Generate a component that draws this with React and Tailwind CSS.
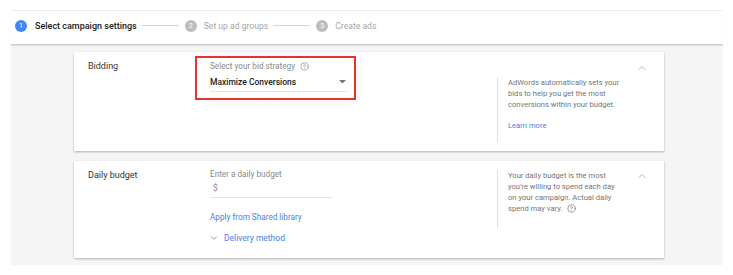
import { ChevronUp, ChevronDown, CircleHelp } from 'lucide-react';

function Step({ n, label, active }) {
  return (
    <div className="flex items-center">
      <div
        className={
          active
            ? 'w-[12px] h-[12px] rounded-full bg-[#4285f4] text-white text-[7px] leading-[12px] text-center'
            : 'w-[12px] h-[12px] rounded-full bg-[#bdbdbd] text-white text-[7px] leading-[12px] text-center'
        }
      >
        {n}
      </div>
      <span
        className={
          active
            ? 'ml-[8px] text-[9px] leading-[12px] font-medium text-[#212121] whitespace-nowrap'
            : 'ml-[7px] text-[8.6px] leading-[12px] text-[#a6a6a6] whitespace-nowrap'
        }
      >
        {label}
      </span>
    </div>
  );
}

function Line() {
  return <div className="ml-[5px] mr-[6px] w-[37px] h-px bg-[#d6d6d6]" />;
}

export default function App() {
  return (
    <div className="w-[733px] h-[275px] bg-white pt-[10px] font-['Roboto',sans-serif] overflow-hidden">
      <div className="ml-[11px] w-[712px]">
        <div className="relative z-10 h-[35px] border-t border-t-[#ececec] border-b border-b-[#cfcfcf] shadow-[0_1px_1px_rgba(0,0,0,0.08)] flex items-center pb-[4px] pl-[4px] bg-white">
          <Step n="1" label="Select campaign settings" active />
          <Line />
          <Step n="2" label="Set up ad groups" />
          <Line />
          <Step n="3" label="Create ads" />
        </div>
        <div className="h-[220px] bg-[#f5f5f5] pt-[7px] pl-[63px]">
          {/* Card 1 */}
          <div className="w-[590px] h-[99px] bg-white shadow-[0_1px_2px_rgba(0,0,0,0.28)] flex items-start">
            <div className="w-[136px] pl-[14px] mt-[8px] text-[9px] leading-[12px] text-[#333333]">Bidding</div>
            <div className="w-[287px] mt-[4px]">
              <div className="ml-[-15px] w-[161px] h-[44px] border-2 border-[#e8322b] pl-[13px] pr-[6px] pt-[2px]">
                <div className="flex items-center h-[12px]">
                  <span className="text-[8.2px] leading-[12px] text-[#8a8a8a] whitespace-nowrap">Select your bid strategy</span>
                  <CircleHelp size={9} strokeWidth={1.8} className="ml-[5px] text-[#8a8a8a]" />
                </div>
                <div className="mt-[4px] h-[12px] flex items-center justify-between pr-[2px]">
                  <span className="text-[8.5px] leading-[12px] font-medium text-[#212121] whitespace-nowrap">Maximize Conversions</span>
                  <svg width="7" height="4" viewBox="0 0 7 4">
                    <path d="M0 0 L7 0 L3.5 3.5 Z" fill="#757575" />
                  </svg>
                </div>
                <div className="mt-[3px] border-b border-[#e4e4e4]" />
              </div>
            </div>
            <div className="w-[125px] mt-[25px] h-[65px] border-l border-[#e0e0e0] pl-[10px]">
              <p className="text-[7.6px] leading-[11px] text-[#757575] whitespace-nowrap">
                AdWords automatically sets your
                <br />
                bids to help you get the most
                <br />
                conversions within your budget.
              </p>
              <p className="mt-[10px] text-[7.6px] leading-[11px] text-[#4a80e8] whitespace-nowrap">Learn more</p>
            </div>
            <ChevronUp size={12} strokeWidth={1.5} className="ml-[14px] mt-[10px] text-[#9e9e9e]" />
          </div>

          {/* Card 2 */}
          <div className="mt-[10px] w-[590px] h-[97px] bg-white shadow-[0_1px_2px_rgba(0,0,0,0.28)] flex items-start">
            <div className="w-[136px] pl-[14px] mt-[8px] text-[9px] leading-[12px] text-[#333333]">Daily budget</div>
            <div className="w-[287px] mt-[7px]">
              <div className="text-[8.2px] leading-[12px] text-[#8a8a8a] whitespace-nowrap">Enter a daily budget</div>
              <div className="mt-[2px] pl-[3px] text-[8.5px] leading-[12px] text-[#8a8a8a]">$</div>
              <div className="mt-[3px] w-[122px] border-b border-[#e4e4e4]" />
              <div className="mt-[13px] text-[8.2px] leading-[12px] text-[#4a80e8] whitespace-nowrap">Apply from Shared library</div>
              <div className="mt-[9px] flex items-center h-[12px]">
                <ChevronDown size={10} strokeWidth={1.8} className="text-[#757575] ml-[-1px]" />
                <span className="ml-[5px] text-[8.5px] leading-[12px] text-[#4a80e8] whitespace-nowrap">Delivery method</span>
              </div>
            </div>
            <div className="w-[125px] mt-[9px] h-[58px] border-l border-[#e0e0e0] pl-[10px]">
              <p className="text-[7.6px] leading-[11px] text-[#757575] whitespace-nowrap">
                Your daily budget is the most
                <br />
                you're willing to spend each day
                <br />
                on your campaign. Actual daily
                <br />
                <span className="inline-flex items-center">
                  spend may vary.
                  <CircleHelp size={9} strokeWidth={1.8} className="ml-[5px] text-[#757575]" />
                </span>
              </p>
            </div>
            <ChevronUp size={12} strokeWidth={1.5} className="ml-[14px] mt-[9px] text-[#9e9e9e]" />
          </div>
        </div>
      </div>
    </div>
  );
}
